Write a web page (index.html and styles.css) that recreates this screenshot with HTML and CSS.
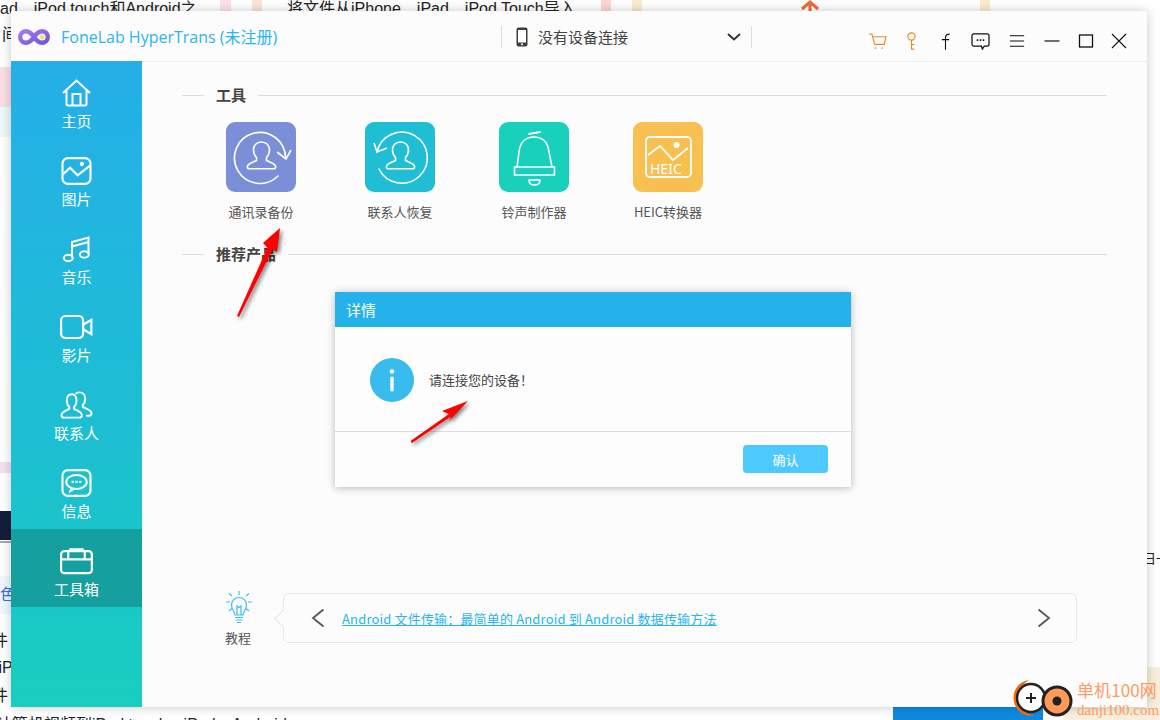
FILE: index.html
```html
<!DOCTYPE html>
<html lang="zh-CN">
<head>
<meta charset="utf-8">
<title>FoneLab HyperTrans</title>
<link rel="stylesheet" href="styles.css">
</head>
<body>
<div class="backdrop">
  <i class="blk b1"></i><i class="blk b2"></i><i class="blk b3"></i><i class="blk b4"></i><i class="blk b5"></i>
  <i class="blk b6"></i><i class="blk b7"></i><i class="blk b8"></i><i class="blk b9"></i><i class="blk b10"></i>
  <i class="blk b11"></i><i class="blk b12"></i><i class="blk b13"></i><i class="blk b14"></i>
  <span class="bt t1">ad、iPod touch和Android之</span>
  <span class="bt t2">间</span>
  <span class="bt t3">将文件从iPhone、iPad、iPod Touch导入</span>
  <span class="bt t4">色</span>
  <span class="bt t5">件</span>
  <span class="bt t6">.iP</span>
  <span class="bt t7">件</span>
  <span class="bt t8">计算机视频到iPod touch、iPad、Android</span>
  <span class="bt t9">日一</span>
  <svg class="up-arrow" viewBox="0 0 20 12"><path d="M2 9 10 2l8 7M10 2v10" fill="none" stroke="#ee6a3c" stroke-width="3"/></svg>
</div>

<div class="window">
  <header class="titlebar">
    <div class="brand">
      <svg class="logo" viewBox="0 0 32 16"><defs><linearGradient id="lg" x1="0" x2="1" y1="0" y2="1"><stop offset="0" stop-color="#a678ee"/><stop offset="1" stop-color="#6f58d8"/></linearGradient></defs><path d="M16 8C13 3.500 10.500 2.200 8 2.200a5.800 5.800 0 0 0 0 11.600c2.500 0 5-1.300 8-5.800s5.500-5.800 8-5.800a5.800 5.800 0 0 1 0 11.600c-2.500 0-5-1.300-8-5.800Z" fill="none" stroke="url(#lg)" stroke-width="4.400"/><circle cx="24" cy="8" r="2.600" fill="#f4e36a"/></svg>
      <span class="app-name">FoneLab HyperTrans (未注册)</span>
    </div>
    <div class="device">
      <svg class="phone" viewBox="0 0 12 20"><rect x=".5" y=".5" width="11" height="19" rx="2" fill="#3d3d3d"/><rect x="2" y="3" width="8" height="12.500" fill="#fff"/><circle cx="6" cy="17.300" r="1" fill="#fff"/></svg>
      <span class="device-name">没有设备连接</span>
      <svg class="chev" viewBox="0 0 14 8"><path d="M1 1l6 5.500L13 1" fill="none" stroke="#333" stroke-width="2"/></svg>
    </div>
    <div class="tb-icons">
      <svg viewBox="0 0 20 18" class="orange"><path d="M1 1h3l3 11h10l2-8H5" fill="none" stroke="currentColor" stroke-width="1.200"/><path d="M7 16h1.500M14 16h1.500" stroke="currentColor" stroke-width="1.500"/></svg>
      <svg viewBox="0 0 14 20" class="orange"><circle cx="7" cy="5" r="4" fill="none" stroke="currentColor" stroke-width="1.200"/><path d="M7 9v10h3M7 14h3" fill="none" stroke="currentColor" stroke-width="1.200"/></svg>
      <svg viewBox="0 0 12 18"><path d="M10.500 1C7.500 1 6 2 6 5v13M2 7h8" fill="none" stroke="#111" stroke-width="1.200"/></svg>
      <svg viewBox="0 0 20 18"><path d="M3 1h14a2 2 0 0 1 2 2v9a2 2 0 0 1-2 2h-3l-2 3-1-3H3a2 2 0 0 1-2-2V3a2 2 0 0 1 2-2Z" fill="none" stroke="#111" stroke-width="1.300"/><path d="M6 7.500h1.600M9.200 7.500h1.600M12.400 7.500h1.600" stroke="#111" stroke-width="2"/></svg>
      <svg viewBox="0 0 18 16"><path d="M1 2h16M1 8h16M1 14h16" stroke="#111" stroke-width="1.200"/></svg>
      <svg viewBox="0 0 16 16"><path d="M.5 8h15" stroke="#111" stroke-width="1.200"/></svg>
      <svg viewBox="0 0 16 16"><rect x="1.500" y="2" width="13" height="12" fill="none" stroke="#111" stroke-width="1.300"/></svg>
      <svg viewBox="0 0 16 16"><path d="M1 1l14 14M15 1 1 15" stroke="#111" stroke-width="1.100"/></svg>
    </div>
  </header>

  <div class="body">
    <nav class="sidebar">
      <a class="nav-item">
        <svg viewBox="0 0 30 28"><path d="M1.500 14 15 1.500 28.500 14M5 11.500V25a1.500 1.500 0 0 0 1.500 1.500h17A1.500 1.500 0 0 0 25 25V11.500M11 26.500V15h8v11.500" fill="none" stroke="#fff" stroke-width="2"/></svg>
        <span>主页</span>
      </a>
      <a class="nav-item">
        <svg viewBox="0 0 28 26"><rect x="1" y="1" width="26" height="24" rx="5" fill="none" stroke="#fff" stroke-width="2"/><path d="M1.500 16 8 10l7 7 11.500-9" fill="none" stroke="#fff" stroke-width="2"/><circle cx="19" cy="6.500" r="2" fill="#fff"/></svg>
        <span>图片</span>
      </a>
      <a class="nav-item">
        <svg viewBox="0 0 28 28"><path d="M9.500 22.500V7L26 2.500V19M9.500 11.500 26 7" fill="none" stroke="#fff" stroke-width="2"/><ellipse cx="5.800" cy="23" rx="4.500" ry="3.200" fill="none" stroke="#fff" stroke-width="2"/><ellipse cx="21.800" cy="19.500" rx="4.500" ry="3.200" fill="none" stroke="#fff" stroke-width="2"/></svg>
        <span>音乐</span>
      </a>
      <a class="nav-item">
        <svg viewBox="0 0 30 22"><rect x="1" y="1" width="20" height="20" rx="4" fill="none" stroke="#fff" stroke-width="2"/><path d="M21 9l7.500-4.500v13L21 13" fill="none" stroke="#fff" stroke-width="2"/></svg>
        <span>影片</span>
      </a>
      <a class="nav-item">
        <svg viewBox="0 0 34 28"><path d="M12.500 3c-4 0-5.500 3.200-5.500 6.500 0 3 1 5 2.500 6.500v2c-2.500 1.500-8 3-8 6.500 0 1.500 1 2.500 2.500 2.500h16c1.500 0 2.500-1 2.500-2.500 0-3.500-5.500-5-8-6.500v-2c1.500-1.500 2.500-3.500 2.500-6.500 0-3.300-1.500-6.500-4.500-6.500Z" fill="none" stroke="#fff" stroke-width="2"/><path d="M16 2.500c1-1 2.500-1.500 4-1.500 4 0 6 3 6 6.500 0 3-1 5-2.500 6.500v2c2.500 1.500 9 3 9 6.500 0 1.500-1 2.500-2.500 2.500H27" fill="none" stroke="#fff" stroke-width="2"/></svg>
        <span>联系人</span>
      </a>
      <a class="nav-item">
        <svg viewBox="0 0 28 26"><rect x="1" y="1" width="26" height="24" rx="5" fill="none" stroke="#fff" stroke-width="2"/><ellipse cx="14" cy="12" rx="9.500" ry="6.500" fill="none" stroke="#fff" stroke-width="1.800"/><path d="M9 17.500 8 21l5-3" fill="none" stroke="#fff" stroke-width="1.500"/><path d="M9.500 12h2M13 12h2M16.500 12h2" stroke="#fff" stroke-width="2"/></svg>
        <span>信息</span>
      </a>
      <a class="nav-item active">
        <svg viewBox="0 0 30 24"><rect x="1" y="3" width="28" height="20" rx="3" fill="none" stroke="#fff" stroke-width="2"/><path d="M1 10.500h28M7.500 3v7.500M22.500 3v7.500" fill="none" stroke="#fff" stroke-width="2"/><path d="M9.500 3V1.500h11V3" fill="none" stroke="#fff" stroke-width="2"/></svg>
        <span>工具箱</span>
      </a>
    </nav>

    <main class="content">
      <section class="tools-section">
        <h2 class="sec-head"><span>工具</span></h2>
        <div class="tools">
          <div class="tool">
            <div class="tool-icon c-purple">
              <svg viewBox="0 0 70 70"><path d="M52 54A25.500 25.500 0 1 1 59.500 36" fill="none" stroke="#fff" stroke-width="1.600" stroke-linecap="round"/><path d="M51 30l9 7 5-9" fill="none" stroke="#fff" stroke-width="1.600"/><path d="M35.500 20c-5 0-8 3.500-8 8 0 3.500 1 5.500 3 7.500v3c-3 1.500-8 2.500-9 5.500-.5 1.500.3 2.800 2 2.800h24c1.700 0 2.500-1.300 2-2.800-1-3-6-4-9-5.500v-3c2-2 3-4 3-7.500 0-4.500-3-8-8-8Z" fill="none" stroke="#fff" stroke-width="1.600"/></svg>
            </div>
            <span>通讯录备份</span>
          </div>
          <div class="tool">
            <div class="tool-icon c-teal">
              <svg viewBox="0 0 70 70"><path d="M14 47A25.500 25.500 0 1 0 12 30" fill="none" stroke="#fff" stroke-width="1.600" stroke-linecap="round"/><path d="M9 21l3 9 10-4" fill="none" stroke="#fff" stroke-width="1.600"/><path d="M35.500 20c-5 0-8 3.500-8 8 0 3.500 1 5.500 3 7.500v3c-3 1.500-8 2.500-9 5.500-.5 1.500.3 2.800 2 2.800h24c1.700 0 2.500-1.300 2-2.800-1-3-6-4-9-5.500v-3c2-2 3-4 3-7.500 0-4.500-3-8-8-8Z" fill="none" stroke="#fff" stroke-width="1.600"/></svg>
            </div>
            <span>联系人恢复</span>
          </div>
          <div class="tool">
            <div class="tool-icon c-green">
              <svg viewBox="0 0 70 70"><path d="M18 45l2-15c1-10 7-15 15-15s14 5 15 15l3 15M15.500 45h40v8h-40Z" fill="none" stroke="#fff" stroke-width="1.600"/><path d="M30 12 41 10" stroke="#fff" stroke-width="1.800" stroke-linecap="round"/><path d="M30 58h11c0 3-2 5-5.500 5S30 61 30 58Z" fill="none" stroke="#fff" stroke-width="1.500"/></svg>
            </div>
            <span>铃声制作器</span>
          </div>
          <div class="tool">
            <div class="tool-icon c-yellow">
              <svg viewBox="0 0 70 70"><rect x="13" y="15" width="45" height="40" rx="4" fill="none" stroke="#fff" stroke-width="1.800"/><path d="M15 33l12-9 13 14 15-12" fill="none" stroke="#fff" stroke-width="1.800"/><circle cx="43.500" cy="23" r="3" fill="#fff"/><text x="17" y="52" class="heic">HEIC</text></svg>
            </div>
            <span>HEIC转换器</span>
          </div>
        </div>
      </section>
      <section class="rec-section">
        <h2 class="sec-head"><span>推荐产品</span></h2>
      </section>
      <div class="tutorial">
        <div class="tut-side">
          <svg viewBox="0 0 30 36"><g fill="none" stroke="#3ebdf0" stroke-width="1.200"><path d="M15 1v4M2 12h4M24 12h4M5 3.500 8 6M25 3.500 22 6M5 21l3-2.500M25 21l-3-2.500"/><path d="M11 25c0-3-3.500-5-3.500-10a7.500 7.500 0 0 1 15 0c0 5-3.500 7-3.500 10Z"/><path d="M11 27.500h8M11.500 30h7M13 32.500h4M13 25v-9l2 1.500 2-1.500v9"/></g></svg>
          <span>教程</span>
        </div>
        <div class="tut-box">
          <svg class="arrow-btn" viewBox="0 0 14 20"><path d="M12.500 1.500 2 10l10.500 8.500" fill="none" stroke="#555" stroke-width="1.800"/></svg>
          <a class="tut-link">Android 文件传输：最简单的 Android 到 Android 数据传输方法</a>
          <svg class="arrow-btn" viewBox="0 0 14 20"><path d="M1.500 1.500 12 10 1.500 18.500" fill="none" stroke="#555" stroke-width="1.800"/></svg>
        </div>
      </div>
    </main>
  </div>
</div>

<div class="dialog">
  <div class="dlg-head">详情</div>
  <div class="dlg-body">
    <svg class="dlg-info" viewBox="0 0 44 44"><circle cx="22" cy="22" r="22" fill="#3abbee"/><circle cx="22" cy="13.500" r="2.200" fill="#fff"/><rect x="20.300" y="18.500" width="3.400" height="15" rx="1.700" fill="#fff"/></svg>
    <span>请连接您的设备！</span>
  </div>
  <div class="dlg-foot"><button class="dlg-btn">确认</button></div>
</div>

<svg class="arrows" viewBox="0 0 1160 720">
  <polygon points="280,228 277,252 272.500,249.500 239,317 237,316 267.500,247.500 263,243" fill="#f00"/>
  <polygon points="468,401 449,421 451,416.500 412,443 410.500,441 449,414 442,411" fill="#f00"/>
</svg>

<div class="watermark">
  <svg class="wm-logo" viewBox="0 0 64 44"><path d="M18 2C6 4 1 14 3 24c2 9 10 15 21 14-8-2-17-7-17-17C7 12 12 6 18 2Z" fill="#f26a10"/><circle cx="20" cy="20" r="14" fill="#fff" stroke="#222" stroke-width="2.500"/><path d="M15 20h10M20 15v10" stroke="#222" stroke-width="2"/><circle cx="46" cy="23" r="14" fill="#ff9a5a" stroke="#222" stroke-width="3"/><circle cx="46" cy="23" r="4.500" fill="#222"/></svg>
  <div class="wm-text"><b>单机100网</b><small>danji100.com</small></div>
</div>
</body>
</html>
```
FILE: styles.css
```css
* { box-sizing: border-box; }
html, body { margin: 0; padding: 0; }
body {
  width: 1160px;
  height: 720px;
  position: relative;
  overflow: hidden;
  background: #fff;
  font-family: "Noto Sans CJK SC", "Noto Sans", sans-serif;
}

/* Page behind the app window */
.backdrop { position: absolute; inset: 0; overflow: hidden; }
.blk { position: absolute; display: block; }
.b1 { left: 220px; top: 0; width: 11px; height: 11px; background: #fde3e8; }
.b2 { left: 252px; top: 0; width: 10px; height: 11px; background: #fde5d6; }
.b3 { left: 601px; top: 0; width: 10px; height: 11px; background: #fdd9d0; }
.b4 { left: 632px; top: 0; width: 10px; height: 11px; background: #fbeccf; }
.b5 { left: 980px; top: 0; width: 10px; height: 11px; background: #fbeccf; }
.b6 { left: 0; top: 67px; width: 11px; height: 40px; background: #fddde4; }
.b7 { left: 0; top: 107px; width: 11px; height: 30px; background: #edf8fc; }
.b8 { left: 0; top: 462px; width: 11px; height: 11px; background: #f3dff0; }
.b9 { left: 0; top: 511px; width: 11px; height: 29px; background: #141d3c; }
.b10 { left: 0; top: 541px; width: 11px; height: 2px; background: #aaa; }
.b11 { left: 0; top: 576px; width: 11px; height: 38px; background: #f0f8fd; }
.b12 { left: 893px; top: 707px; width: 150px; height: 13px; background: #0f8adf; }
.b13 { left: 1063px; top: 667px; width: 97px; height: 53px; background: #f5efdc; }
.b14 { left: 1147px; top: 600px; width: 13px; height: 67px; background: #fff; }
.bt { position: absolute; font-family: "Liberation Sans", "Noto Sans CJK SC", sans-serif; font-size: 16px; line-height: 20px; color: #222; white-space: nowrap; }
.t1 { left: 0; top: -1px; }
.t2 { left: 2px; top: 25px; }
.t3 { left: 287px; top: -1px; }
.t4 { left: 0; top: 585px; color: #3b6fe0; }
.t5 { left: -8px; top: 631px; }
.t6 { left: -6px; top: 658px; }
.t7 { left: -8px; top: 686px; }
.t8 { left: -4px; top: 715px; }
.t9 { left: 1143px; top: 549px; font-size: 13px; }
.up-arrow { position: absolute; left: 800px; top: 0; width: 20px; height: 12px; }

/* App window */
.window {
  position: absolute;
  left: 11px;
  top: 11px;
  width: 1136px;
  height: 696px;
  display: flex;
  flex-direction: column;
  background: #fcfcfc;
  box-shadow: 0 0 10px rgba(0, 0, 0, .22);
}
.titlebar { height: 50px; flex: none; display: flex; align-items: center; }
.brand { width: 490px; flex: none; display: flex; align-items: center; padding-left: 7px; gap: 11px; margin-top: 1px; }
.logo { width: 32px; height: 16px; flex: none; }
.app-name { font-family: "Open Sans", "Noto Sans CJK SC", sans-serif; font-size: 16px; color: #2ab5ee; white-space: nowrap; margin-top: -1px; }
.device {
  width: 251px;
  height: 22px;
  flex: none;
  margin-top: 1px;
  display: flex;
  align-items: center;
  padding: 0 10px 0 14px;
  border-left: 1px solid #ddd;
  border-right: 1px solid #ddd;
}
.phone { width: 12px; height: 20px; flex: none; }
.device-name { margin-left: 10px; font-size: 15px; color: #444; white-space: nowrap; margin-top: -1px; }
.chev { width: 14px; height: 8px; margin-left: auto; }
.tb-icons {
  flex: 1;
  display: grid;
  grid-template-columns: 34px 34px 34px 37px 36px 34px 33px 34px;
  justify-items: center;
  align-items: center;
  padding-left: 108px;
  margin-top: 10px;
}
.tb-icons svg { display: block; width: 16px; height: 16px; color: #111; }
.tb-icons svg:nth-child(1) { width: 19px; height: 17px; }
.tb-icons svg:nth-child(2) { width: 13px; height: 18px; }
.tb-icons svg:nth-child(3) { width: 11px; height: 17px; }
.tb-icons svg:nth-child(4) { width: 19px; height: 17px; }
.tb-icons svg.orange { color: #f5841f; }

.body { flex: 1; display: flex; min-height: 0; }
.sidebar {
  width: 131px;
  flex: none;
  display: flex;
  flex-direction: column;
  background: linear-gradient(180deg, #25afe9 0%, #1cc0d0 62%, #18cebf 100%);
}
.nav-item {
  height: 78px;
  flex: none;
  display: flex;
  flex-direction: column;
  align-items: center;
  justify-content: center;
  padding-top: 9px;
  color: #fff;
  font-size: 15px;
  line-height: 20px;
  gap: 4px;
}
.nav-item svg { height: 28px; width: 33px; display: block; }
.nav-item.active { background: #169f9f; }

.content {
  flex: 1;
  min-width: 0;
  border-top: 1px solid #eee;
  padding: 23px 40px 0;
  display: flex;
  flex-direction: column;
}
.sec-head {
  margin: 0;
  height: 20px;
  display: flex;
  align-items: center;
  font-size: 15px;
  font-weight: 700;
  color: #444;
  line-height: 20px;
}
.sec-head::before { content: ""; width: 22px; height: 1px; background: #ddd; margin-right: 12px; }
.sec-head::after { content: ""; flex: 1; height: 1px; background: #ddd; margin-left: 12px; }
.tools {
  display: grid;
  grid-template-columns: 139px 134px 134px 70px;
  margin: 17px 0 0 44px;
}
.tool { width: 70px; display: flex; flex-direction: column; align-items: center; font-size: 13px; color: #555; line-height: 20px; white-space: nowrap; gap: 10px; }
.tool-icon { width: 70px; height: 70px; border-radius: 9px; }
.tool-icon svg { display: block; width: 70px; height: 70px; }
.c-purple { background: #7a8fd8; }
.c-teal { background: #1fbed4; }
.c-green { background: #19d0bd; }
.c-yellow { background: #f7c050; }
.heic { font-family: "Noto Sans", sans-serif; font-size: 14px; fill: #fff; }
.rec-section { margin-top: 22px; }
.tutorial { margin-top: auto; margin-bottom: 59px; display: flex; align-items: flex-start; }
.tut-side { width: 101px; flex: none; display: flex; flex-direction: column; padding-left: 43px; font-size: 13px; color: #555; line-height: 20px; }
.tut-side svg { width: 30px; height: 36px; display: block; margin-bottom: 2px; margin-left: -1px; }
.tut-box {
  position: relative;
  flex: none;
  width: 794px;
  height: 50px;
  margin-top: 3px;
  margin-right: -30px;
  background: #fcfcfc;
  border: 1px solid #e6e6e6;
  border-radius: 6px;
  display: flex;
  align-items: center;
  padding: 0 25px 0 27px;
}
.tut-box::before {
  content: "";
  position: absolute;
  left: -7px;
  top: 18px;
  width: 12px;
  height: 12px;
  background: #fcfcfc;
  border-left: 1px solid #e6e6e6;
  border-bottom: 1px solid #e6e6e6;
  transform: rotate(45deg);
}
.arrow-btn { width: 14px; height: 20px; flex: none; }
.tut-link { margin-left: 17px; margin-right: auto; font-size: 13px; letter-spacing: .17px; color: #2ab5ee; text-decoration: underline; white-space: nowrap; }

/* Modal */
.dialog {
  position: absolute;
  left: 335px;
  top: 292px;
  width: 516px;
  height: 195px;
  background: #fdfdfd;
  box-shadow: 0 1px 8px rgba(0, 0, 0, .28);
  display: flex;
  flex-direction: column;
}
.dlg-head { height: 35px; flex: none; background: #25b1e9; color: #fff; font-size: 15px; line-height: 35px; padding-left: 11px; }
.dlg-body { height: 105px; flex: none; border-bottom: 1px solid #ddd; display: flex; align-items: center; padding: 0 0 0 35px; font-size: 13px; color: #444; gap: 15px; }
.dlg-info { width: 44px; height: 44px; flex: none; margin-top: 1px; }
.dlg-foot { flex: 1; display: flex; justify-content: flex-end; align-items: flex-start; padding: 13px 23px 0 0; }
.dlg-btn { width: 85px; height: 28px; border: 0; border-radius: 4px; padding: 0; background: #4cc9ff; color: #fff; font-family: inherit; font-size: 13px; }

/* Annotation arrows drawn over the shot */
.arrows { position: absolute; left: 0; top: 0; width: 1160px; height: 720px; pointer-events: none; filter: drop-shadow(2px 2px 2px rgba(0, 0, 0, .55)); }

/* Site watermark */
.watermark { position: absolute; left: 1011px; top: 678px; display: flex; align-items: flex-start; }
.wm-logo { width: 64px; height: 44px; flex: none; }
.wm-text { margin-left: 2px; display: flex; flex-direction: column; color: #ff9a62; white-space: nowrap; }
.wm-text b { font-weight: 400; font-size: 17px; line-height: 24px; letter-spacing: .1px; }
.wm-text small { font-family: "Liberation Serif", serif; font-size: 15px; line-height: 16px; }
```
